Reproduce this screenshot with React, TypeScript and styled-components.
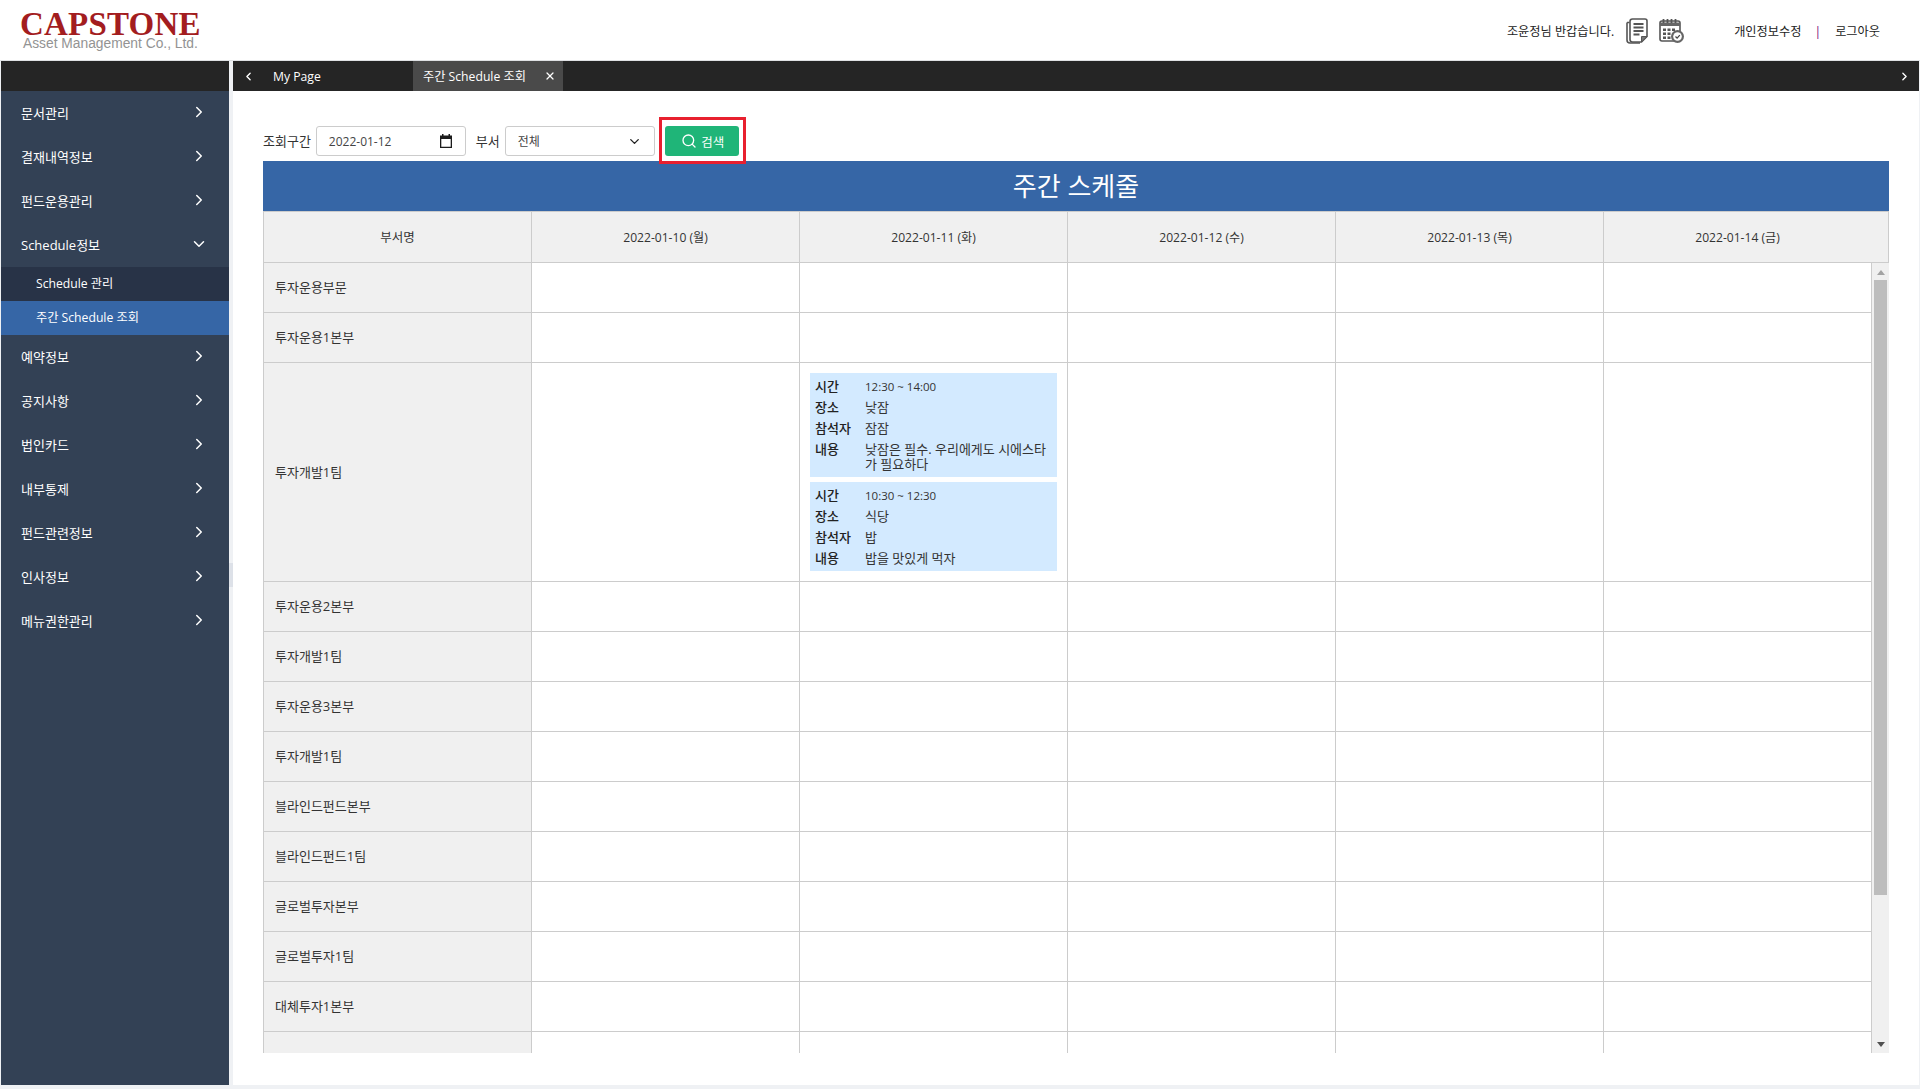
import { ChevronDown, ChevronLeft, ChevronRight, Search, X } from "lucide-react";
import styled, { createGlobalStyle } from "styled-components";

const GlobalStyle = createGlobalStyle`
  html, body {
    margin: 0;
    padding: 0;
    background: #eff1f4;
  }
  * {
    box-sizing: border-box;
  }
  body {
    font-family: "Open Sans", "Noto Sans CJK KR", sans-serif;
    font-size: 13px;
    color: #333;
  }
`;

const Page = styled.div`
  width: 1920px;
  height: 1089px;
  display: flex;
  flex-direction: column;
  overflow: hidden;
`;

//------header-------
const Header = styled.header`
  height: 61px;
  flex: none;
  background: #fff;
  border-bottom: 1px solid #dfe1e4;
  display: flex;
  align-items: center;
  padding: 0 40px 0 20px;
`;
const Logo = styled.div`
  display: flex;
  flex-direction: column;
  width: 190px;
  padding-top: 2px;
`;
const LogoMain = styled.span`
  font-family: "Liberation Serif", serif;
  font-weight: bold;
  font-size: 33px;
  line-height: 24px;
  letter-spacing: 0.2px;
  color: #a31d1f;
`;
const LogoSub = styled.span`
  font-family: "Liberation Sans", sans-serif;
  font-size: 13.8px;
  line-height: 14px;
  margin-top: 1px;
  padding-left: 3px;
  color: #939393;
`;
const UserArea = styled.div`
  margin-left: auto;
  padding-top: 2px;
  display: flex;
  align-items: center;
  font-size: 12.2px;
  color: #222;
`;
const IconGroup = styled.div`
  display: flex;
  align-items: center;
  gap: 11px;
  margin: 0 49px 0 12px;
`;
const Divider = styled.span`
  margin: 0 14px 0 13px;
  color: #7a0f7a;
`;

//------layout-------
const Body = styled.div`
  flex: 1;
  min-height: 0;
  display: flex;
  padding: 0 1px 4px;
`;
const Sidebar = styled.nav`
  width: 228px;
  flex: none;
  background: #334155;
`;
const SidebarTop = styled.div`
  height: 30px;
  background: #252525;
`;
const MenuItem = styled.div`
  height: 44px;
  display: flex;
  align-items: center;
  justify-content: space-between;
  padding: 0 21px 2px 20px;
  color: #fff;
  font-size: 13px;
`;
const SubMenu = styled.div`
  background: #283347;
`;
const SubItem = styled.div<{ $active?: boolean }>`
  height: 34px;
  display: flex;
  align-items: center;
  padding: 0 0 2px 35px;
  color: #fff;
  font-size: 12.2px;
  background: ${(p) => (p.$active ? "#3666a6" : "transparent")};
`;
const Gutter = styled.div`
  width: 4px;
  flex: none;
  display: flex;
  align-items: center;
`;
const GutterHandle = styled.div`
  width: 4px;
  height: 24px;
  margin-top: 4px;
  background: #dde1e8;
`;
const Main = styled.main`
  flex: 1;
  min-width: 0;
  background: #fff;
  display: flex;
  flex-direction: column;
`;

//------tab-------
const TabBar = styled.div`
  height: 30px;
  flex: none;
  background: #252525;
  display: flex;
  align-items: stretch;
  color: #fff;
  font-size: 12.2px;
`;
const TabArrow = styled.div`
  width: 30px;
  flex: none;
  display: flex;
  align-items: center;
  justify-content: center;
`;
const Tab = styled.div<{ $active?: boolean }>`
  width: 150px;
  display: flex;
  align-items: center;
  justify-content: space-between;
  padding: 0 7px 0 10px;
  background: ${(p) => (p.$active ? "#4a4a4a" : "transparent")};
`;
const TabSpacer = styled.div`
  flex: 1;
`;

//------filter-------
const Content = styled.div`
  padding: 35px 30px 0;
`;
const FilterRow = styled.div`
  position: relative;
  display: flex;
  align-items: center;
  height: 30px;
  margin-bottom: 5px;
  font-size: 13px;
`;
const FilterLabel = styled.span`
  margin: 0 5px 2px 0;
`;
const Field = styled.div<{ $gapRight?: number }>`
  width: 150px;
  height: 30px;
  display: flex;
  align-items: center;
  justify-content: space-between;
  padding: 0 12px;
  border: 1px solid #ccc;
  border-radius: 3px;
  margin-right: ${(p) => p.$gapRight ?? 0}px;
  font-size: 12px;
  color: #444;
`;
const SearchButton = styled.button`
  width: 74px;
  height: 30px;
  display: flex;
  align-items: center;
  justify-content: center;
  gap: 4px;
  border: 0;
  border-radius: 3px;
  background: #1fb578;
  color: #fff;
  font: inherit;
  font-size: 12.5px;
  padding: 0 0 0 2px;
`;
const Highlight = styled.div`
  position: absolute;
  left: 396px;
  top: -9px;
  width: 87px;
  height: 47px;
  border: 3px solid #e8202f;
  pointer-events: none;
`;

//------table-------
const TitleBar = styled.div`
  height: 50px;
  padding-bottom: 2px;
  background: #3666a6;
  color: #fff;
  font-size: 26px;
  display: flex;
  align-items: center;
  justify-content: center;
`;
const HeadRow = styled.div`
  display: grid;
  grid-template-columns: repeat(5, 268px) 1fr;
  height: 52px;
  border-top: 1px solid #ccc;
  border-left: 1px solid #ccc;
  background: #f0f0f0;
`;
const HeadCell = styled.div<{ $date?: boolean }>`
  display: flex;
  align-items: center;
  justify-content: center;
  padding-bottom: 1px;
  border-right: 1px solid #ccc;
  border-bottom: 1px solid #ccc;
  font-size: ${(p) => (p.$date ? "12.1px" : "12.5px")};
  color: #333;
  &:last-child {
    padding-right: 17px;
  }
`;
const TableBody = styled.div`
  display: flex;
  height: 790px;
`;
const RowsClip = styled.div`
  flex: 1;
  min-width: 0;
  overflow: hidden;
  border-left: 1px solid #ccc;
`;
const Row = styled.div`
  display: grid;
  grid-template-columns: repeat(6, 268px);
  min-height: 50px;
`;
const NameCell = styled.div`
  display: flex;
  align-items: center;
  padding: 0 0 2px 11px;
  background: #f0f0f0;
  border-right: 1px solid #ccc;
  border-bottom: 1px solid #ccc;
`;
const DayCell = styled.div`
  display: flex;
  flex-direction: column;
  gap: 5px;
  padding: 10px;
  background: #fff;
  border-right: 1px solid #ccc;
  border-bottom: 1px solid #ccc;
  &:last-child {
    border-right: 0;
  }
`;
const EventCard = styled.div`
  background: #d3eaff;
  padding: 3px 5px 2px;
  font-size: 13px;
  line-height: 15px;
`;
const EventLine = styled.div`
  display: grid;
  grid-template-columns: 50px 1fr;
  padding: 3px 0;
`;
const EventKey = styled.span`
  font-weight: 500;
  color: #222;
`;
const EventTime = styled.span`
  font-size: 11.5px;
`;
const ScrollTrack = styled.div`
  width: 18px;
  flex: none;
  background: #f0f0f0;
  border-left: 1px solid #ccc;
  display: flex;
  flex-direction: column;
  align-items: center;
  padding: 7px 0 6px;
`;
const ScrollThumb = styled.div`
  width: 13px;
  height: 615px;
  margin-top: 5px;
  background: #bdbdbd;
`;
const ArrowUp = styled.div`
  width: 0;
  height: 0;
  border: 4px solid transparent;
  border-top: 0;
  border-bottom: 5px solid #a3a3a3;
`;
const ArrowDown = styled.div`
  width: 0;
  height: 0;
  margin-top: auto;
  border: 4px solid transparent;
  border-bottom: 0;
  border-top: 5px solid #505050;
`;

const MENU_TOP = ["문서관리", "결재내역정보", "펀드운용관리"];
const MENU_BOTTOM = [
  "예약정보",
  "공지사항",
  "법인카드",
  "내부통제",
  "펀드관련정보",
  "인사정보",
  "메뉴권한관리",
];
const DAYS = [
  "2022-01-10 (월)",
  "2022-01-11 (화)",
  "2022-01-12 (수)",
  "2022-01-13 (목)",
  "2022-01-14 (금)",
];
const EVENTS = [
  {
    time: "12:30 ~ 14:00",
    place: "낮잠",
    people: "잠잠",
    body: "낮잠은 필수. 우리에게도 시에스타가 필요하다",
  },
  {
    time: "10:30 ~ 12:30",
    place: "식당",
    people: "밥",
    body: "밥을 맛있게 먹자",
  },
];
const DEPTS_AFTER = [
  "투자운용2본부",
  "투자개발1팀",
  "투자운용3본부",
  "투자개발1팀",
  "블라인드펀드본부",
  "블라인드펀드1팀",
  "글로벌투자본부",
  "글로벌투자1팀",
  "대체투자1본부",
  "",
];

const DocIcon = () => (
  <svg width="22" height="26" viewBox="0 0 22 26" fill="none" stroke="#555">
    <path d="M1 4.5h2.5M1 4.5v17.5q0 3 3 3h10" strokeWidth="1.6" />
    <path
      d="M4 3.5q0-2.5 2.5-2.5h12.5q2 0 2 2v15.5l-5.5 5.5h-9q-2.5 0-2.5-2.5z"
      strokeWidth="1.6"
      fill="#fff"
    />
    <path d="M21 18.5h-5.5v5.5z" fill="#777" strokeWidth="1" />
    <path d="M7.5 6h10M7.5 9.5h10M7.5 13h10M7.5 16.5h6" strokeWidth="1.8" />
  </svg>
);

const CalendarIcon = () => (
  <svg width="26" height="26" viewBox="0 0 26 26" fill="none">
    <rect x="1" y="3" width="20" height="20" rx="2" stroke="#555" strokeWidth="1.6" />
    <path d="M1 4.5h20v3.5h-20z" fill="#666" />
    <path d="M4.5 1v4M8.5 1v4M12.5 1v4M16.5 1v4" stroke="#555" strokeWidth="1.8" />
    <path
      d="M4 10.5h3v2.5h-3zM8.5 10.5h3v2.5h-3zM13 10.5h3v2.5h-3zM4 14.5h3v2.5h-3zM8.5 14.5h3v2.5h-3zM4 18.5h3v2.5h-3zM8.5 18.5h3v2.5h-3z"
      fill="#555"
    />
    <circle cx="18.5" cy="18.5" r="6.5" fill="#666" />
    <circle cx="18.5" cy="18.5" r="4.3" fill="#fff" />
    <path d="M16.5 18.5l1.6 1.6 2.7-3" stroke="#444" strokeWidth="1.3" />
  </svg>
);

const DateIcon = () => (
  <svg width="14" height="14" viewBox="0 0 14 14">
    <path d="M1 1.5h2V0h1.5v1.5h5V0H11v1.5h2v12.5H1zM2.3 5v7.7h9.4V5z" fill="#1c1c1c" />
  </svg>
);

const Schedule = ({ ev }: { ev: (typeof EVENTS)[number] }) => (
  <EventCard>
    <EventLine>
      <EventKey>시간</EventKey>
      <EventTime>{ev.time}</EventTime>
    </EventLine>
    <EventLine>
      <EventKey>장소</EventKey>
      <span>{ev.place}</span>
    </EventLine>
    <EventLine>
      <EventKey>참석자</EventKey>
      <span>{ev.people}</span>
    </EventLine>
    <EventLine>
      <EventKey>내용</EventKey>
      <span>{ev.body}</span>
    </EventLine>
  </EventCard>
);

const EmptyRow = ({ name }: { name: string }) => (
  <Row>
    <NameCell>{name}</NameCell>
    {DAYS.map((d) => (
      <DayCell key={d} />
    ))}
  </Row>
);

const App = () => {
  return (
    <Page>
      <GlobalStyle />
      <Header>
        <Logo>
          <LogoMain>CAPSTONE</LogoMain>
          <LogoSub>Asset Management Co., Ltd.</LogoSub>
        </Logo>
        <UserArea>
          <span>조윤정님 반갑습니다.</span>
          <IconGroup>
            <DocIcon />
            <CalendarIcon />
          </IconGroup>
          <span>개인정보수정</span>
          <Divider>|</Divider>
          <span>로그아웃</span>
        </UserArea>
      </Header>
      <Body>
        <Sidebar>
          <SidebarTop />
          {MENU_TOP.map((m) => (
            <MenuItem key={m}>
              {m}
              <ChevronRight size={18} strokeWidth={2} color="#fff" />
            </MenuItem>
          ))}
          <MenuItem>
            Schedule정보
            <ChevronDown size={18} strokeWidth={2} color="#fff" />
          </MenuItem>
          <SubMenu>
            <SubItem>Schedule 관리</SubItem>
            <SubItem $active>주간 Schedule 조회</SubItem>
          </SubMenu>
          {MENU_BOTTOM.map((m) => (
            <MenuItem key={m}>
              {m}
              <ChevronRight size={18} strokeWidth={2} color="#fff" />
            </MenuItem>
          ))}
        </Sidebar>
        <Gutter>
          <GutterHandle />
        </Gutter>
        <Main>
          <TabBar>
            <TabArrow>
              <ChevronLeft size={13} strokeWidth={2.5} color="#fff" />
            </TabArrow>
            <Tab>My Page</Tab>
            <Tab $active>
              주간 Schedule 조회
              <X size={12} strokeWidth={2.5} color="#fff" />
            </Tab>
            <TabSpacer />
            <TabArrow>
              <ChevronRight size={13} strokeWidth={2.5} color="#fff" />
            </TabArrow>
          </TabBar>
          <Content>
            <FilterRow>
              <FilterLabel>조회구간</FilterLabel>
              <Field $gapRight={10}>
                2022-01-12
                <DateIcon />
              </Field>
              <FilterLabel>부서</FilterLabel>
              <Field $gapRight={10}>
                전체
                <ChevronDown size={15} strokeWidth={2.2} color="#222" />
              </Field>
              <SearchButton>
                <Search size={16} strokeWidth={2} color="#fff" />
                검색
              </SearchButton>
              <Highlight />
            </FilterRow>
            <TitleBar>주간 스케줄</TitleBar>
            <HeadRow>
              <HeadCell>부서명</HeadCell>
              {DAYS.map((d) => (
                <HeadCell key={d} $date>
                  {d}
                </HeadCell>
              ))}
            </HeadRow>
            <TableBody>
              <RowsClip>
                <EmptyRow name="투자운용부문" />
                <EmptyRow name="투자운용1본부" />
                <Row>
                  <NameCell>투자개발1팀</NameCell>
                  <DayCell />
                  <DayCell>
                    {EVENTS.map((ev) => (
                      <Schedule key={ev.time} ev={ev} />
                    ))}
                  </DayCell>
                  <DayCell />
                  <DayCell />
                  <DayCell />
                </Row>
                {DEPTS_AFTER.map((name, i) => (
                  <EmptyRow key={i} name={name} />
                ))}
              </RowsClip>
              <ScrollTrack>
                <ArrowUp />
                <ScrollThumb />
                <ArrowDown />
              </ScrollTrack>
            </TableBody>
          </Content>
        </Main>
      </Body>
    </Page>
  );
};
export default App;
